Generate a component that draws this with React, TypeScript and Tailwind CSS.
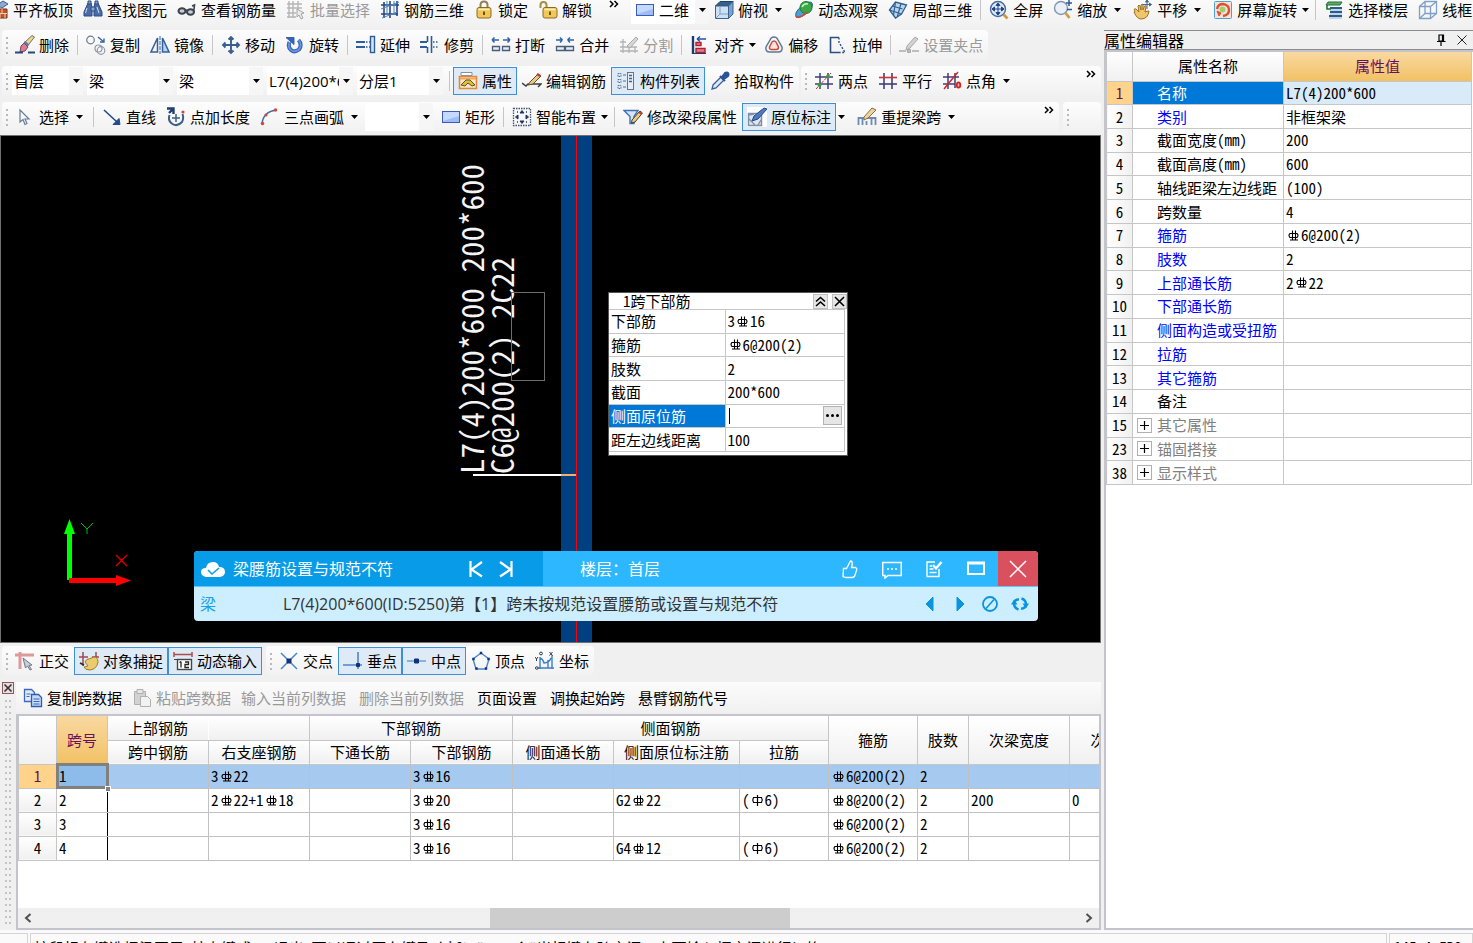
import React from "react";

type Kids = { children?: React.ReactNode };

const icons: Record<string, React.ReactNode> = {
  flush: (
    <>
      <path d="M8 5 14 1l5 3-6 4z" fill="#8ea9cf" stroke="#3c5f96" />
      <path d="M9 9h9v9H9z" fill="#c0562a" stroke="#7b2f12" />
      <path d="M9 13.5h9M13 9v4.500M11 13.500V18M16 13.500V18" stroke="#f3d3b4" />
    </>
  ),
  binoculars: (
    <>
      <path d="M5 3h3l1 4v9H1v-4zM12 3h3l4 9v4h-8V7z" fill="#4a6da8" stroke="#2b4a82" />
      <path d="M8 7h4v4H8zM5 1h3v3H5zM12 1h3v3h-3z" fill="#88a5d2" stroke="#2b4a82" />
      <path d="M4 8l-1.500 5M14 7l2 6" stroke="#cfdcf2" />
    </>
  ),
  glasses: (
    <>
      <ellipse cx="5" cy="11" rx="3.500" ry="2.800" fill="#c9ced6" stroke="#3d434c" strokeWidth="2" />
      <ellipse cx="13.500" cy="12" rx="3.500" ry="2.800" fill="#c9ced6" stroke="#3d434c" strokeWidth="2" />
      <path d="M8 10.500q1.200-1 2.400 0M16.700 11.500 17.500 5l-2.500 1" stroke="#3d434c" strokeWidth="1.600" />
    </>
  ),
  batch: (
    <>
      <path d="M3 1v17M7 1v17M12 1v10M1 4h15M1 8h15M1 13h9M1 17h9" stroke="#b5b5b5" strokeWidth="1.400" />
      <path d="m11 9 7 4-3 1 2 4-2 1-2-4-2 2z" fill="#ececec" stroke="#a5a5a5" />
    </>
  ),
  grid3d: (
    <>
      <path d="M1 5h18M1 14h17M4 2v16M10 1v17M17 1v15" stroke="#28467c" strokeWidth="1.600" />
      <path d="M1 9 19 2M2 18l15-6M7 1v14M14 1v14" stroke="#4f86c6" />
    </>
  ),
  lock: (
    <>
      <path d="M6.500 8V5q0-3.500 3.500-3.500T13.500 5v3" stroke="#8d8256" strokeWidth="2" />
      <rect x="3" y="7.500" width="14" height="10.500" rx="2" fill="#f1c75a" stroke="#8d6b1e" />
      <path d="M4.500 9.500h11" stroke="#fff0bc" strokeWidth="1.500" />
      <path d="M10 11.500v3.500" stroke="#6c5214" strokeWidth="2" />
    </>
  ),
  unlock: (
    <>
      <path d="M2.500 8V5Q2.500 2 5.500 2T8.500 5v3" stroke="#a98f43" strokeWidth="2" />
      <rect x="5" y="7.500" width="14" height="10.500" rx="2" fill="#f1c75a" stroke="#8d6b1e" />
      <path d="M6.500 9.500h11" stroke="#fff0bc" strokeWidth="1.500" />
      <path d="M12 11.500v3.500" stroke="#6c5214" strokeWidth="2" />
    </>
  ),
  rect: (
    <>
      <rect x="1.500" y="4.500" width="17" height="11" fill="#9dbcf8" stroke="#3a5cb8" />
      <path d="M2 5h16v4L2 14z" fill="#c5d8fd" stroke="none" />
    </>
  ),
  cube: (
    <>
      <path d="M1.500 6 6 1.500h13L14.500 6z" fill="#35618f" stroke="#1f4269" />
      <path d="M1.500 6h13v12.500h-13z" fill="#cde1f3" stroke="#3a648f" />
      <path d="M14.500 6 19 1.500V14l-4.500 4.500z" fill="#7ba3cb" stroke="#3a648f" />
      <path d="M1.500 18.500 6 14h8M6 14V7" stroke="#7d9fc0" />
    </>
  ),
  orbit: (
    <>
      <path d="M2 17Q0 12 8 6T18 3q2 4-5 10T2 17z" fill="#4e9fd3" stroke="#25618f" />
      <circle cx="12" cy="7.500" r="6" fill="#39a845" stroke="#1f7a30" />
      <path d="M8 7q2-4 6-3" stroke="#c7f0bf" strokeWidth="1.600" />
      <path d="M2 17q5 1 11-5" stroke="#d8482f" strokeWidth="1.600" />
    </>
  ),
  local3d: (
    <>
      <path d="m1.500 10 6-8 11 3-5 9-6 4z" fill="#b8d4ee" stroke="#2f608f" strokeWidth="1.300" />
      <path d="m4.500 6 10 3M7.500 2l-2 13M13 3.500 9.500 16M1.500 10l12 4" stroke="#2f608f" strokeWidth="1.200" />
    </>
  ),
  full: (
    <>
      <circle cx="9" cy="9" r="7.500" fill="#dce8f8" stroke="#4a6a9a" strokeWidth="1.400" />
      <path d="M9 3.500v11M3.500 9h11M9 3 7 5.500h4zM9 15l-2-2.500h4zM3 9l2.500-2v4zM15 9l-2.500-2v4z" fill="#1f4684" stroke="#1f4684" />
      <path d="m14.500 14.500 4 4" stroke="#c99b40" strokeWidth="2.600" />
    </>
  ),
  zoom: (
    <>
      <circle cx="8" cy="8" r="6.500" fill="#e9f0fa" stroke="#8295b0" strokeWidth="1.400" />
      <path d="m12.500 13 4 5" stroke="#d29c3c" strokeWidth="2.800" />
      <path d="M13 3h6M16 0v6M14 9.500h5" stroke="#2d5795" strokeWidth="1.500" />
    </>
  ),
  pan: (
    <>
      <path d="M2 12q-2-4 1-3l3 3-1-6q1-2 2 0l1 4V5q1.500-2 2 0v5l1.500-4q2-1 1.500 1l-1 5q2-1 4-1-1 8-8 8-4 0-7-7z" fill="#f0c56b" stroke="#9b7123" />
      <path d="M14 0v9M9.500 4.500h9M14 0l-1.500 2h3zM18.500 4.500l-2-1.500v3z" fill="#4a6690" stroke="#4a6690" />
    </>
  ),
  screenRotate: (
    <>
      <rect x="1.500" y="1.500" width="17" height="17" rx="1" fill="#f3e2e0" stroke="#4ea3cc" />
      <path d="M4 9q1-5 6-5 6 1 6 6 0 5-6 6" stroke="#e0512b" strokeWidth="2.400" />
      <path d="m4 11 4 2-2 3z" fill="#e0512b" stroke="#e0512b" />
      <circle cx="9.500" cy="9.500" r="3" fill="#9bd06a" stroke="none" />
    </>
  ),
  floors: (
    <>
      <path d="M4 2 2 5h14l2-3z" fill="#58b05c" stroke="#23703a" />
      <path d="M6 8h12M6 12h12M5 16h13" stroke="#2b5c8c" strokeWidth="2" />
      <path d="M6 10h12M6 14h12M5 18h13" stroke="#8db6dc" />
      <path d="M3 5v4h4" stroke="#23703a" strokeWidth="1.600" />
    </>
  ),
  wire: (
    <>
      <path d="M1.500 6.500h11v12h-11zM7 1.500h11.500v12H7zM1.500 6.500 7 1.500M12.500 6.500l6-5M12.500 18.500l6-5M1.500 18.500l5.500-5" stroke="#7f9fc4" strokeWidth="1.300" />
    </>
  ),
  erase: (
    <>
      <path d="m9 8 8-7.500 2.500 1.500-7 9z" fill="#f3d77a" stroke="#6b6f86" />
      <path d="m6 11 3-3 4 4-3 4-5 1z" fill="#d87d94" stroke="#7d3f58" />
      <path d="m9.500 6.500 4 4" stroke="#5b79b6" strokeWidth="2.400" />
      <path d="M0 17.500h8M13 17.500h7" stroke="#27497e" strokeWidth="2" />
    </>
  ),
  copy: (
    <>
      <circle cx="4.500" cy="5" r="3.800" stroke="#6f7b8c" strokeWidth="1.200" />
      <circle cx="12.500" cy="13.500" r="3.500" stroke="#8e98a6" strokeWidth="1.200" />
      <circle cx="15" cy="15.500" r="3.800" stroke="#8e98a6" strokeWidth="1.200" />
      <path d="m12 2 6 5M18 3.500V7h-4" stroke="#3a64a6" strokeWidth="1.400" />
    </>
  ),
  mirror: (
    <>
      <path d="M7.500 3v14H1z" stroke="#33619f" strokeWidth="1.500" />
      <path d="M12.500 3v14H19z" fill="#b9d3ef" stroke="#33619f" strokeWidth="1.500" />
      <path d="M10 1v18" stroke="#33619f" strokeDasharray="4 1" />
    </>
  ),
  move: <path d="M10 2v16M2 10h16M7.500 4.500 10 2l2.500 2.500M7.500 15.500 10 18l2.500-2.500M4.500 7.500 2 10l2.500 2.500M15.500 7.500 18 10l-2.500 2.500" stroke="#3b5f8f" strokeWidth="1.900" />,
  rotate: (
    <>
      <path d="M4.500 7Q2.500 12 6 15t8-.500q3.500-5-.500-9.500" stroke="#3762b5" strokeWidth="4" />
      <path d="M4.500 7Q2.500 12 6 15t8-.500q3.500-5-.500-9.500" stroke="#6e97e2" strokeWidth="1.600" />
      <path d="M1 2.500h8v7z" fill="#3762b5" stroke="#3762b5" />
    </>
  ),
  extend: (
    <>
      <path d="M0 7h9M0 12h9" stroke="#2d5c99" strokeWidth="1.800" />
      <path d="M10 7h4M10 12h4" stroke="#2d5c99" strokeWidth="1.500" strokeDasharray="1.500 1.500" />
      <rect x="14.500" y="1.500" width="4" height="16" fill="#d5e5f7" stroke="#2d5c99" strokeWidth="1.400" />
    </>
  ),
  trim: (
    <>
      <path d="M0 7h7M0 12h7" stroke="#2d5c99" strokeWidth="1.800" />
      <path d="M13 7h6M13 12h6" stroke="#2d5c99" strokeWidth="1.500" strokeDasharray="1.500 1.500" />
      <path d="M7.500 18V12M7.500 7V1M11.500 1v17" stroke="#2d5c99" strokeWidth="1.600" />
    </>
  ),
  breakIcon: (
    <>
      <path d="M1 5h7M1 5l2.500-2.500M1 5l2.500 2.500M19 5h-7M19 5l-2.500-2.500M19 5l-2.500 2.500" stroke="#2f62ad" strokeWidth="1.500" />
      <path d="M1.500 11.500h7v4h-7zM11.500 11.500h7v4h-7z" fill="#e4edf7" stroke="#4a5d78" strokeWidth="1.300" />
    </>
  ),
  merge: (
    <>
      <path d="M1 5h6M7.500 5 5 2.500M7.500 5 5 7.500M19 5h-6M12.500 5 15 2.500M12.500 5 15 7.500" stroke="#2f62ad" strokeWidth="1.500" />
      <path d="M1.500 11.500h8v4h-8zM10.500 11.500h8v4h-8z" fill="#e4edf7" stroke="#4a5d78" strokeWidth="1.300" />
    </>
  ),
  split: (
    <>
      <path d="M1 7h6M1 16h18M4 4v14M10 12v6M16 12v6M1 12h17" stroke="#b3b3b3" strokeWidth="1.300" />
      <path d="m8 11 9-9 2 2-8 9z" fill="#d7d7d7" stroke="#a8a8a8" />
    </>
  ),
  align: (
    <>
      <path d="M3 1v18" stroke="#1d3a73" strokeWidth="2.400" />
      <path d="M6 7.500h5v3H6zM6 13.500h9v4H6z" fill="#e87b86" stroke="#b02035" strokeWidth="1.400" />
      <path d="M7 4h9M7 4l3-2.500M7 4l3 2.500" stroke="#2450a2" strokeWidth="1.400" />
      <path d="M3 18.500h13" stroke="#1d3a73" />
    </>
  ),
  offset: (
    <>
      <path d="M10 2q3 0 4 3l4 7q1 5-4 5H6q-5 0-4-5l4-7q1-3 4-3z" stroke="#5b7896" strokeWidth="1.500" />
      <path d="M10 6q2 0 2.500 2l2 4q0 2.500-2 2.500h-5q-2.500 0-2-2.500l2-4Q8 6 10 6z" fill="#fbe0dc" stroke="#cc4a3c" strokeWidth="1.500" />
    </>
  ),
  stretch: (
    <>
      <path d="M11 2.500H2.500v15H11" stroke="#2a5082" strokeWidth="1.600" />
      <path d="M11 2.500v5l6 10h-6" stroke="#2a5082" strokeWidth="1.400" strokeDasharray="2 1.500" />
    </>
  ),
  grip: (
    <>
      <path d="m8 11 8-9 3 2-8 9-4 2z" fill="#d2d2d2" stroke="#aaa" />
      <path d="M0 16h7M13 16h7" stroke="#aaa" strokeWidth="1.400" />
      <path d="M8.500 14.500h3v3h-3z" fill="#bbb" stroke="#aaa" />
    </>
  ),
  props: (
    <>
      <path d="M3 1.500h11v3H3z" fill="#fff" stroke="#8291a6" />
      <path d="M1.500 5.500h17v12h-17z" fill="#fde6c4" stroke="#e08a3c" strokeWidth="1.600" />
      <path d="M2 7.500h16" stroke="#f0a860" strokeWidth="2" />
      <path d="m3 14 5-5 4 0 5 5-3 1-4-3-3 3z" fill="#e0bd3c" stroke="#4f5a2a" />
    </>
  ),
  editBar: (
    <>
      <path d="M0 12l4 3 2-2h13l-3 3" stroke="#3c3c3c" strokeWidth="1.500" />
      <path d="m8 11 8-8 3 2-8 8-5 1z" fill="#e8c78a" stroke="#6b4a2a" />
      <path d="m15 3 3 2" stroke="#c23a3a" strokeWidth="2.200" />
    </>
  ),
  list: (
    <>
      <path d="M2 2.500h3v3H2zM2 8.500h3v3H2zM2 14.500h3v3H2z" stroke="#506e97" strokeDasharray="1.500 .8" />
      <path d="M7 4h3M7 10h3M7 16h3" stroke="#506e97" />
      <rect x="11.500" y="1.500" width="6" height="17" fill="#e9eef6" stroke="#60758f" />
      <path d="M13 4.500h3M13 7.500h3M13 10.500h3" stroke="#3b62a6" strokeWidth="1.500" />
    </>
  ),
  picker: (
    <>
      <path d="m3 14 8-8 3 3-8 8-4 1z" fill="#dfe9f7" stroke="#3b5f98" strokeWidth="1.300" />
      <path d="m10 5 5 5M12 6l3-4q2-1 3 0t0 3l-4 3z" fill="#2c5397" stroke="#2c5397" strokeWidth="2" />
    </>
  ),
  twoPt: (
    <>
      <path d="M6 2v16M14 2v16M1 6h18M1 13h18" stroke="#403f7b" strokeWidth="1.500" />
      <path d="M2 18 17 2" stroke="#c93636" strokeDasharray="3 1" />
      <circle cx="5.500" cy="14" r="2" fill="#3e9a35" stroke="none" />
      <circle cx="14" cy="5.500" r="2" fill="#3e9a35" stroke="none" />
    </>
  ),
  parallel: (
    <>
      <path d="M6 2v16M14 2v16" stroke="#403f7b" strokeWidth="1.600" />
      <path d="M1 6.500h18" stroke="#c93636" strokeWidth="1.600" />
      <path d="M1 13h18" stroke="#403f7b" strokeWidth="1.600" />
    </>
  ),
  angle: (
    <>
      <path d="M6 2v16M13 2v15M1 6h16M1 13h12" stroke="#403f7b" strokeWidth="1.500" />
      <path d="M2 18 16 1" stroke="#d32222" strokeWidth="1.400" />
      <ellipse cx="16.500" cy="14" rx="1.800" ry="2.600" fill="#f6b0b0" stroke="#d32222" strokeWidth="1.800" />
    </>
  ),
  cursor: <path d="M5 3v12l3-2.500 2 5 2-1-2-4.500h4z" fill="#f4f7fb" stroke="#6a7d99" strokeWidth="1.200" />,
  line: (
    <>
      <path d="m2 3 13 12" stroke="#234a8c" strokeWidth="1.600" />
      <path d="M18 17.500h-7l6-6z" fill="#234a8c" stroke="#234a8c" />
    </>
  ),
  ptLength: (
    <>
      <path d="M3.500 8q-2 6 3 9t9.500-2q2-4 .500-8" stroke="#3d6085" strokeWidth="2" />
      <path d="M1 1.500h6.500V7M3 6l4-4" stroke="#1f3f6f" strokeWidth="2.400" />
      <path d="M10 7v8M6 11h8" stroke="#3d6085" strokeWidth="1.500" />
      <circle cx="17" cy="5" r="1.600" fill="#d04b3c" stroke="none" />
    </>
  ),
  arc: (
    <>
      <path d="M2 17Q3 5 16 3" stroke="#3c6eb0" strokeWidth="1.500" />
      <circle cx="2.500" cy="16.500" r="1.800" fill="#d04b3c" stroke="none" />
      <circle cx="6" cy="8" r="1.600" fill="#d04b3c" stroke="none" />
      <circle cx="15.500" cy="3" r="1.800" fill="#d04b3c" stroke="none" />
    </>
  ),
  smart: (
    <>
      <rect x="1.500" y="1.500" width="17" height="17" stroke="#41536e" strokeDasharray="1.500 1" strokeWidth="1.300" />
      <path d="m10 3.500 2 2.500H8zM10 16.500 8 14h4zM3.500 10 6 8v4zM16.500 10 14 12V8z" fill="#22375c" stroke="#22375c" />
      <path d="M5 5h1M14 5h1M5 15h1M14 15h1" stroke="#22375c" strokeWidth="1.600" />
    </>
  ),
  modify: (
    <>
      <path d="M1 3.500h14l-4 6v7H7v-7z" fill="#d5e5f7" stroke="#3d73b5" strokeWidth="1.400" />
      <path d="m9 13 8-9 2.500 2-7.500 9-3.500 1z" fill="#f0d080" stroke="#4a3a2a" />
      <path d="m16 5 2.500 2" stroke="#c23a3a" strokeWidth="2" />
    </>
  ),
  annotate: (
    <>
      <rect x="0" y="0" width="20" height="20" fill="#fff" stroke="none" />
      <path d="M1.500 6.500h13v12h-13z" fill="#dfe6f0" stroke="#7f8fa8" strokeWidth="1.500" />
      <path d="M2 12l6 6M2 8l5-1M11 18l3-5" stroke="#7f8fa8" strokeWidth="1.400" />
      <path d="m5 14 2-5 10-8 3 1-9 10z" fill="#4c7bc0" stroke="#234a85" />
    </>
  ),
  reSpan: (
    <>
      <path d="M1.500 18v-7h4v7M5.500 11h9v7M9.500 18v-4M14.500 11h4v7" stroke="#6d8bb0" strokeWidth="1.800" />
      <path d="m7 10 8-9 4 2-8 8-4 2z" fill="#ecd6a0" stroke="#8a6b40" />
    </>
  ),
  ortho: (
    <>
      <path d="M0 4h19M5 1v17" stroke="#dc9a9c" strokeWidth="3" />
      <path d="m8 7 9 7-3 .5 2.500 4-1.500.5-2.500-4-2 2z" fill="#c8ccd4" stroke="#70798a" />
    </>
  ),
  snap: (
    <>
      <path d="M4 1v14M0 6h9M17 1v6M13 6h7" stroke="#a04a50" strokeWidth="1.500" />
      <path d="M6 11q2-4 4-3l5-2q4 0 4 5-1 7-8 8-5 0-6-3l4-1z" fill="#eacb6e" stroke="#a17c2c" />
      <path d="m1 12 4 2" stroke="#2c2c2c" strokeWidth="1.600" />
    </>
  ),
  dyn: (
    <>
      <path d="M1 1v5M19 1v5M1 3.500h18" stroke="#b14a50" strokeWidth="1.500" />
      <rect x="4.500" y="8.500" width="14" height="10" fill="#fff" stroke="#444" strokeWidth="1.400" />
      <path d="M8 10.500v6M6.500 11.500 8 10.500M12 11h3.500v2.500H12V16.500h4" stroke="#222" strokeWidth="1.300" />
      <path d="M1 8.500h3" stroke="#444" />
    </>
  ),
  cross: (
    <>
      <path d="m2 2 16 16M18 2 2 18" stroke="#4a86cc" strokeWidth="1.500" />
      <path d="M8 8h4v4H8z" fill="#12307c" stroke="#12307c" />
    </>
  ),
  perp: (
    <>
      <path d="M0 14h19M15 1v17" stroke="#4a86cc" strokeWidth="1.600" />
      <path d="M13.500 12.500h3v3h-3z" fill="#12307c" stroke="#12307c" />
    </>
  ),
  mid: (
    <>
      <path d="M0 10h19" stroke="#6c9ed8" strokeWidth="1.500" />
      <path d="M7.500 8h4v4h-4z" fill="#12307c" stroke="#12307c" />
    </>
  ),
  vertex: (
    <>
      <path d="m10 2 8 6-3 10H5L2 8z" stroke="#4a86cc" strokeWidth="1.400" />
      <path d="M9.500 1.500h1v1h-1zM17 7.500h1v1h-1zM2 7.500h1v1H2zM5 17h1v1H5zM14.500 17h1v1h-1z" stroke="#12307c" strokeWidth="1.400" />
    </>
  ),
  coord: (
    <>
      <path d="M5 6v12M3 17h16M5 7q3 1 4 5 5 0 7-5M13 9v8M17 4v14" stroke="#3a7fc8" strokeWidth="1.400" />
      <circle cx="6" cy="2.500" r="1.400" stroke="#2b3850" />
      <path d="m14.500 1 3 3.500M17.500 1l-3 3.500M0 6l1.500 2L3 6M1.500 8v2" stroke="#2b3850" />
      <circle cx="1.800" cy="17" r="1.300" stroke="#2b3850" />
    </>
  ),
  docs: (
    <>
      <path d="M1.500 1.500h7l3 3v9h-10z" fill="#dfeafb" stroke="#3d69b8" strokeWidth="1.300" />
      <path d="M8.500 6.500h7l3 3v9h-10z" fill="#c6dafa" stroke="#2f5cb0" strokeWidth="1.300" />
      <path d="M10.500 11h6M10.500 13.500h6M10.500 16h6M3.500 6h4M3.500 8.500h3" stroke="#3d69b8" />
    </>
  ),
  paste: (
    <>
      <path d="M2.500 3.500h11v13h-11z" fill="#d2d2d2" stroke="#b0b0b0" />
      <path d="M5 1.500h6v4H5z" fill="#e6e6e6" stroke="#b0b0b0" />
      <path d="M8.500 8.500h7l3 3v7h-10z" fill="#f2f2f2" stroke="#b0b0b0" />
    </>
  ),
};

const Icon = ({ name }: { name: string }) => (
  <svg viewBox="0 0 20 20" fill="none" aria-hidden="true" className="h-5 w-5 shrink-0">
    {icons[name]}
  </svg>
);

const Tri = () => (
  <svg viewBox="0 0 7 4" aria-hidden="true" className="h-1 w-[7px] shrink-0 fill-black">
    <path d="M0 0h7L3.500 4z" />
  </svg>
);

type ToolProps = {
  icon?: string;
  label: string;
  on?: boolean;
  off?: boolean;
  arrow?: "split" | "menu";
};

const Tool = ({ icon, label, on, off, arrow }: ToolProps) => (
  <>
    <button
      type="button"
      disabled={off}
      aria-pressed={on}
      className={`flex h-7 shrink-0 items-center gap-1 border px-1 whitespace-nowrap ${
        on ? "border-[#3b8fdd] bg-[#deebf6]" : "border-transparent"
      } ${off ? "text-[#9a9a9a]" : "text-black"}`}
    >
      {icon && <Icon name={icon} />}
      {label}
    </button>
    {arrow && (
      <button
        type="button"
        aria-label={`${label}选项`}
        className={`flex h-7 shrink-0 items-center ${arrow === "split" ? "w-4 pl-0.5" : "w-[10px]"}`}
      >
        <Tri />
      </button>
    )}
  </>
);

const Sep = () => (
  <span className="flex h-5 w-[7px] shrink-0 justify-center">
    <span className="w-px bg-[#c6c6c6]" />
  </span>
);

const Handle = () => (
  <span className="flex w-2 shrink-0 flex-col items-center gap-[3px] pl-0.5">
    {[0, 1, 2, 3].map((i) => (
      <span key={i} className="h-0.5 w-0.5 bg-[#b9b9b9]" />
    ))}
  </span>
);

const Bar = ({ children, grow }: Kids & { grow?: boolean }) => (
  <div
    className={`flex h-[30px] min-w-0 items-center rounded-sm bg-gradient-to-b from-[#fdfdfd] to-[#f1f1f1] ${
      grow ? "flex-1" : ""
    }`}
  >
    {children}
  </div>
);

const Combo = ({ label, value, width, icon }: { label: string; value: string; width: string; icon?: string }) => (
  <div className={`flex h-7 shrink-0 items-center bg-white ${width}`}>
    {icon && (
      <span className="px-1">
        <Icon name={icon} />
      </span>
    )}
    <select aria-label={label} className="h-7 min-w-0 flex-1 appearance-none overflow-hidden bg-white text-black data-[pad=true]:pl-0.5" data-pad={!icon}>
      <option>{value}</option>
    </select>
    <span className="flex h-7 w-[14px] shrink-0 items-center justify-center bg-[#f6f6f6]">
      <Tri />
    </span>
  </div>
);

const More = () => (
  <button type="button" aria-label="更多" className="flex h-4 w-5 shrink-0 items-start justify-center">
    <svg viewBox="0 0 10 8" fill="none" stroke="#000" strokeWidth="1.500" className="h-2 w-[10px]">
      <path d="m1 1 3 3-3 3M5.500 1l3 3-3 3" />
    </svg>
  </button>
);

/* Bar-grade marks: # is ribbed steel, ~ is plain round steel. */
const Mark = ({ plain }: { plain?: boolean }) => (
  <svg viewBox="0 0 15 15" fill="none" stroke="currentColor" className="h-[15px] w-[15px] shrink-0" aria-hidden="true">
    {plain ? (
      <path d="M3.500 4.500h8q1.500 2.500 0 5h-8q-1.500-2.500 0-5zM7.500 2v11" strokeWidth="1.200" />
    ) : (
      <path d="M4 5.500h7q2 2 0 4H4q-2-2 0-4zM6.500 2.500v10M9.500 2.500v10M4 12h8" strokeWidth="1.100" />
    )}
  </svg>
);

const Value = ({ text }: { text: string }) => (
  <span className="flex items-center whitespace-pre">
    {text.split(/([#~])/).map((part, i) =>
      part === "#" ? <Mark key={i} /> : part === "~" ? <Mark key={i} plain /> : <span key={i}>{part}</span>
    )}
  </span>
);

const monoText = "font-['Noto_Sans_Mono_CJK_SC','Noto_Sans_CJK_SC',monospace]";

const props: [number, string, string, string][] = [
  [1, "名称", "L7(4)200*600", "sel"],
  [2, "类别", "非框架梁", "blue"],
  [3, "截面宽度(mm)", "200", ""],
  [4, "截面高度(mm)", "600", ""],
  [5, "轴线距梁左边线距", "(100)", ""],
  [6, "跨数量", "4", ""],
  [7, "箍筋", "#6@200(2)", "blue"],
  [8, "肢数", "2", "blue"],
  [9, "上部通长筋", "2#22", "blue"],
  [10, "下部通长筋", "", "blue"],
  [11, "侧面构造或受扭筋", "", "blue"],
  [12, "拉筋", "", "blue"],
  [13, "其它箍筋", "", "blue"],
  [14, "备注", "", ""],
  [15, "其它属性", "", "group"],
  [23, "锚固搭接", "", "group"],
  [38, "显示样式", "", "group"],
];

const nameColor: Record<string, string> = {
  sel: "bg-[#0078d7] text-white",
  blue: "text-[#0000ff]",
  group: "text-[#808080]",
  "": "text-black",
};

const PropertyPanel = () => (
  <aside className={`flex w-[369px] shrink-0 flex-col border-b-2 border-[#c4c4cc] text-[15px] leading-5 ${monoText}`}>
    <div className="flex h-5 items-center border-t border-b border-[#8c8c8c] bg-[#f0f0f0]">
      <h2 className="flex-1 text-[16px]">属性编辑器</h2>
      <button type="button" aria-label="固定" className="mr-2 flex h-4 w-4 items-center justify-center">
        <svg viewBox="0 0 10 12" fill="none" stroke="#000" className="h-3 w-[10px]">
          <path d="M3 1h4.500v6H3zM1 7.500h8.500M5 7.500V12M6.500 1v6" strokeWidth="1.200" />
        </svg>
      </button>
      <button type="button" aria-label="关闭属性编辑器" className="flex h-4 w-4 items-center">
        <svg viewBox="0 0 10 10" stroke="#222" className="h-[10px] w-[10px]">
          <path d="m.5.5 9 9M9.500.500l-9 9" />
        </svg>
      </button>
    </div>
    <div className="min-h-0 flex-1 border-t-2 border-l-2 border-[#c4c4cc] bg-white">
      <table className="h-[433px] w-[366px] table-fixed border-collapse">
        <colgroup>
          <col className="w-[26px]" />
          <col className="w-[151px]" />
          <col />
        </colgroup>
        <thead>
          <tr className="h-[29px] bg-gradient-to-b from-white to-[#f0f0f0]">
            <th className="border border-t-0 border-[#c6c6c6] p-0" />
            <th className="border border-t-0 border-[#c6c6c6] p-0 font-normal">属性名称</th>
            <th className="border border-t-0 border-[#c6c6c6] bg-gradient-to-b from-[#f9d8a0] to-[#f1c163] p-0 font-normal text-[#6a0f5c]">
              属性值
            </th>
          </tr>
        </thead>
        <tbody>
          {props.map(([n, name, value, kind]) => (
            <tr key={n}>
              <th
                scope="row"
                className={`border border-[#c6c6c6] p-0 font-normal ${
                  kind === "sel" ? "bg-[#ffd48a] text-[#6a0f5c]" : "bg-gradient-to-r from-white to-[#f0f0f0]"
                }`}
              >
                {n}
              </th>
              <td className={`border border-[#c6c6c6] p-0 ${nameColor[kind]}`}>
                <span className="flex items-center whitespace-nowrap">
                  <span className="flex w-6 shrink-0 items-center pl-1">
                    {kind === "group" && (
                      <button
                        type="button"
                        aria-label={`展开${name}`}
                        className="flex h-[15px] w-[15px] items-center justify-center border border-[#b0b0b0] bg-white text-black"
                      >
                        <svg viewBox="0 0 9 9" stroke="#000" className="h-[9px] w-[9px]">
                          <path d="M4.500 0v9M0 4.500h9" strokeWidth="1.200" />
                        </svg>
                      </button>
                    )}
                  </span>
                  {name}
                </span>
              </td>
              <td className={`border border-[#c6c6c6] p-0 pl-0.5 ${kind === "sel" ? "bg-[#d9eaf9]" : "bg-white"}`}>
                <Value text={value} />
              </td>
            </tr>
          ))}
        </tbody>
      </table>
    </div>
  </aside>
);

const Drawing = () => (
  <svg className="absolute inset-0 h-full w-full" aria-label="梁平面图">
    <rect x="560" y="0" width="31" height="100%" fill="#004080" />
    <rect x="575" y="0" width="1" height="100%" fill="#ff0000" shapeRendering="crispEdges" />
    <rect x="472" y="338" width="103" height="2" fill="#ffffff" />
    <rect x="560" y="338" width="15" height="2" fill="#f0b070" />
    <g className={monoText} fontSize="31" fill="#f4f4f4">
      <text transform="translate(483 338) rotate(-90)" xmlSpace="preserve">L7(4)200*600 200*600</text>
      <text transform="translate(513 338) rotate(-90)" xmlSpace="preserve">C6@200(2) 2C22</text>
    </g>
    <rect x="510.500" y="156.500" width="33" height="88" fill="none" stroke="#6e6e6e" />
    <path d="M66 444V398h-3l5.500-15 5.500 15h-3v46z" fill="#00ff00" />
    <path d="M68 442h47v-3l15 5.500-15 5.500v-3H68z" fill="#ff0000" />
    <path d="m80 387 6 6 6-6M86 393v5" fill="none" stroke="#00c000" />
    <path d="m115 419 11 11M126 419l-11 11" fill="none" stroke="#e00000" strokeWidth="1.300" />
  </svg>
);

const spanRows: [string, string][] = [
  ["下部筋", "3#16"],
  ["箍筋", "#6@200(2)"],
  ["肢数", "2"],
  ["截面", "200*600"],
  ["侧面原位筋", ""],
  ["距左边线距离", "100"],
];

const SpanDialog = () => (
  <section className={`absolute top-[156px] left-[607px] w-[240px] border border-[#555] bg-white pb-[3px] text-[15px] leading-5 ${monoText}`}>
    <div className="flex h-4 items-center">
      <h3 className="flex-1 pl-[14px]">1跨下部筋</h3>
      <button type="button" aria-label="收起" className="mr-1 flex h-[15px] w-[15px] items-center justify-center border border-[#c0c0c0] bg-[#e6e6e6]">
        <svg viewBox="0 0 11 11" fill="none" stroke="#000" strokeWidth="1.600" className="h-[11px] w-[11px]">
          <path d="M1 5.500 5.500 1.500 10 5.500M1 10l4.500-4L10 10" />
        </svg>
      </button>
      <button type="button" aria-label="关闭" className="flex h-[15px] w-[15px] items-center justify-center border border-[#c0c0c0] bg-[#e6e6e6]">
        <svg viewBox="0 0 11 11" fill="none" stroke="#000" strokeWidth="1.600" className="h-[11px] w-[11px]">
          <path d="m1 1 9 9M10 1l-9 9" />
        </svg>
      </button>
    </div>
    <table className="h-[143px] w-[236px] table-fixed border-collapse border-t border-[#777]">
      <colgroup>
        <col className="w-[116px]" />
        <col />
      </colgroup>
      <tbody>
        {spanRows.map(([name, value]) => (
          <tr key={name}>
            <th
              scope="row"
              className={`border border-l-0 border-[#c6c6c6] p-0 pl-0.5 text-left font-normal whitespace-nowrap ${
                value === "" ? "bg-[#0078d7] text-white" : ""
              }`}
            >
              {name}
            </th>
            <td className="border border-[#c6c6c6] p-0 pl-0.5">
              {value === "" ? (
                <span className="flex items-center pl-px">
                  <input aria-label={name} className="h-4 min-w-0 flex-1 border-l border-black outline-none" />
                  <button type="button" aria-label="更多选项" className="mr-0.5 flex h-[19px] w-[19px] items-center justify-center gap-0.5 border border-[#b4b4b4] bg-[#e6e6e6]">
                    {[0, 1, 2].map((i) => (
                      <span key={i} className="h-[3px] w-[3px] rounded-full bg-black" />
                    ))}
                  </button>
                </span>
              ) : (
                <Value text={value} />
              )}
            </td>
          </tr>
        ))}
      </tbody>
    </table>
  </section>
);

const NoticeButton = ({ label, children }: Kids & { label: string }) => (
  <button type="button" aria-label={label} className="flex h-5 w-5 items-center justify-center">
    <svg viewBox="0 0 20 20" fill="none" stroke="currentColor" className="h-5 w-5">
      {children}
    </svg>
  </button>
);

const Notice = () => (
  <section className="absolute top-[415px] left-[193px] w-[844px] overflow-hidden rounded-sm bg-[#cceeff] text-[16px] leading-6">
    <div className="flex h-[35px] items-stretch text-white">
      <div className="flex w-[349px] items-center bg-[#079be8] pl-1.5">
        <svg viewBox="0 0 26 18" className="h-[18px] w-[26px]" fill="#fff">
          <path d="M6 17q-5-1-5-5 0-4 5-4 1-6 7-6 5 0 6 5 6 0 6 5 0 4-5 5z" />
          <path d="m8 10 4 4 7-6" fill="none" stroke="#079be8" strokeWidth="1.500" />
        </svg>
        <h3 className="flex-1 pl-[7px]">梁腰筋设置与规范不符</h3>
        <div className="flex gap-[10px] pr-[27px]">
          <NoticeButton label="上一条">
            <path d="M4.500 2v16M16 3 5.500 10.500 16 17.500" strokeWidth="2.200" />
          </NoticeButton>
          <NoticeButton label="下一条">
            <path d="M15.500 2v16M4 3l10.500 7.500L4 17.500" strokeWidth="2.200" />
          </NoticeButton>
        </div>
      </div>
      <div className="flex flex-1 items-center bg-[#2db7ff] pl-[37px]">
        <p className="flex-1">楼层：首层</p>
        <div className="flex gap-[22px] pr-3">
          <NoticeButton label="赞同">
            <path d="M3.500 9.500h3l4-7.500q3 0 1 6.500h4q2 1 1 3l-2 6q-1 1-3 1H6l-3-1z" strokeWidth="1.300" />
          </NoticeButton>
          <NoticeButton label="评论">
            <path d="M.700 3.500h18.600v13H6l-3 2.500v-2.500H.700zM5 10h2M9 10h2M13 10h2" strokeWidth="1.500" />
          </NoticeButton>
          <NoticeButton label="记录">
            <path d="M11 3H3v14.500h12V10M5.500 7H8M5.500 10h4M5.500 13.500h7" strokeWidth="1.400" />
            <path d="m9 6 3 3.500L17.500 3" strokeWidth="2.400" />
          </NoticeButton>
          <NoticeButton label="最大化">
            <path d="M2 4h16v11H2z" strokeWidth="2" />
            <path d="M1 4h18" strokeWidth="3" />
          </NoticeButton>
        </div>
      </div>
      <button type="button" aria-label="关闭提示" className="flex w-10 items-center justify-center bg-[#d9515f]">
        <svg viewBox="0 0 18 18" stroke="#fff" strokeWidth="1.500" className="h-[18px] w-[18px]">
          <path d="m1 1 16 16M17 1 1 17" />
        </svg>
      </button>
    </div>
    <div className="flex h-[35px] items-center border-t border-[#5cc8ff] pr-2">
      <a href="#beam" className="w-[89px] pl-[6px] text-[#1a9fe8]">
        梁
      </a>
      <p className="flex-1 whitespace-nowrap text-[#333]">L7(4)200*600(ID:5250)第【1】跨未按规范设置腰筋或设置与规范不符</p>
      <div className="flex gap-[10px] text-[#0a94e0]">
        <NoticeButton label="上一处">
          <path d="M13 3v14l-7-7z" fill="currentColor" />
        </NoticeButton>
        <NoticeButton label="下一处">
          <path d="M7 3v14l7-7z" fill="currentColor" />
        </NoticeButton>
        <NoticeButton label="忽略">
          <circle cx="10" cy="10" r="7" strokeWidth="1.800" />
          <path d="m6 14.500 8-9" strokeWidth="1.600" />
        </NoticeButton>
        <NoticeButton label="刷新">
          <path d="M8.500 15.500Q4 14 4 9.500 5 5 9 5.500M11.500 4.500q4.500 1.500 4.500 6-1 4.500-5 4" strokeWidth="2.400" />
          <path d="m1 10.500 6.500 0-3.500-5zM19 9.500h-6.500l3.500 5z" fill="currentColor" stroke="none" />
        </NoticeButton>
      </div>
    </div>
  </section>
);

const gridRows: string[][] = [
  ["1", "", "3#22", "", "3#16", "", "", "", "#6@200(2)", "2", "", ""],
  ["2", "", "2#22+1#18", "", "3#20", "", "G2#22", "(~6)", "#8@200(2)", "2", "200", "0"],
  ["3", "", "", "", "3#16", "", "", "", "#6@200(2)", "2", "", ""],
  ["4", "", "", "", "3#16", "", "G4#12", "(~6)", "#6@200(2)", "2", "", ""],
];

const headCell = "border border-t-0 border-[#c6c6c6] bg-gradient-to-b from-white to-[#f0f0f0] p-0 font-normal whitespace-nowrap overflow-hidden";

const SpanGrid = () => (
  <div className={`flex h-[216px] flex-col border-2 border-[#c4c4cc] bg-white text-[15px] leading-5 ${monoText}`}>
    <div className="min-h-0 flex-1 overflow-hidden">
      <table className="w-[1153px] table-fixed border-collapse">
        <colgroup>
          <col className="w-[38px]" />
          <col className="w-[51px]" />
          <col className="w-[101px]" />
          <col className="w-[101px]" />
          <col className="w-[101px]" />
          <col className="w-[102px]" />
          <col className="w-[101px]" />
          <col className="w-[126px]" />
          <col className="w-[89px]" />
          <col className="w-[89px]" />
          <col className="w-[51px]" />
          <col className="w-[101px]" />
          <col className="w-[102px]" />
        </colgroup>
        <thead>
          <tr className="h-6">
            <th rowSpan={2} className={headCell} />
            <th rowSpan={2} className="border border-t-0 border-[#c6c6c6] bg-gradient-to-b from-[#f9d8a0] to-[#f1c163] p-0 font-normal text-[#6a0f5c]">
              跨号
            </th>
            <th className={`${headCell} border-r-transparent`}>上部钢筋</th>
            <th className={`${headCell} border-l-0`} />
            <th colSpan={2} className={headCell}>下部钢筋</th>
            <th colSpan={3} className={headCell}>侧面钢筋</th>
            <th rowSpan={2} className={headCell}>箍筋</th>
            <th rowSpan={2} className={headCell}>肢数</th>
            <th rowSpan={2} className={headCell}>次梁宽度</th>
            <th rowSpan={2} className={headCell}>次梁加筋</th>
          </tr>
          <tr className="h-6">
            {["跨中钢筋", "右支座钢筋", "下通长筋", "下部钢筋", "侧面通长筋", "侧面原位标注筋", "拉筋"].map((h) => (
              <th key={h} className={headCell}>
                {h}
              </th>
            ))}
          </tr>
        </thead>
        <tbody>
          {gridRows.map((row, r) => (
            <tr key={r} className={`h-6 ${r === 0 ? "bg-[#a6c9ef]" : "bg-white"}`}>
              <th
                scope="row"
                className={`border border-[#c6c6c6] p-0 font-normal ${
                  r === 0 ? "bg-[#ffd48a] text-[#6a0f5c]" : "bg-gradient-to-b from-white to-[#f0f0f0]"
                }`}
              >
                {r + 1}
              </th>
              {row.map((cell, c) => (
                <td
                  key={c}
                  className={`border p-0 pl-0.5 ${
                    c === 0
                      ? r === 0
                        ? "relative border-[#808080] bg-[#8dbcea] outline-3 -outline-offset-2 outline-[#808080]"
                        : "border-[#c6c6c6] border-r-black"
                      : "border-[#c0c0c0]"
                  }`}
                >
                  <Value text={cell} />
                  {c === 0 && r === 0 && <span className="absolute -right-1 -bottom-1 h-1.5 w-1.5 border border-white bg-[#808080]" />}
                </td>
              ))}
            </tr>
          ))}
        </tbody>
      </table>
    </div>
    <div className="flex h-5 items-center bg-[#f0f0f0]">
      <button type="button" aria-label="向左滚动" className="flex w-5 justify-center">
        <svg viewBox="0 0 8 10" fill="none" stroke="#505050" strokeWidth="2" className="h-[10px] w-2">
          <path d="M6.500 1 2 5l4.500 4" />
        </svg>
      </button>
      <div className="flex h-5 flex-1">
        <div className="w-[61%]" />
        <div className="w-[300px] shrink-0 bg-[#cdcdcd]" />
        <div className="w-[39%]" />
      </div>
      <button type="button" aria-label="向右滚动" className="flex w-5 justify-center">
        <svg viewBox="0 0 8 10" fill="none" stroke="#505050" strokeWidth="2" className="h-[10px] w-2">
          <path d="M1.500 1 6 5 1.500 9" />
        </svg>
      </button>
    </div>
  </div>
);

export default function App() {
  return (
    <div className="flex h-screen flex-col overflow-hidden bg-[#f0f0f0] font-['Open_Sans','Noto_Sans_CJK_SC',sans-serif] text-[15px] leading-5 text-black">
      <header className="flex h-[30px] shrink-0 items-center overflow-hidden bg-gradient-to-b from-[#fafafa] to-[#f0f0f0] pb-[10px]">
        <div className="-ml-4 flex items-center">
          <Tool icon="flush" label="平齐板顶" />
          <Tool icon="binoculars" label="查找图元" />
          <Tool icon="glasses" label="查看钢筋量" />
          <Tool icon="batch" label="批量选择" off />
          <Tool icon="grid3d" label="钢筋三维" />
          <Tool icon="lock" label="锁定" />
          <Tool icon="unlock" label="解锁" />
          <span className="flex h-5 w-[34px] shrink-0 items-start justify-center">
            <More />
          </span>
          <Combo label="视图" value="二维" width="w-[78px]" icon="rect" />
          <Tool icon="cube" label="俯视" arrow="split" />
          <Tool icon="orbit" label="动态观察" />
          <Tool icon="local3d" label="局部三维" />
          <Sep />
          <Tool icon="full" label="全屏" />
          <Tool icon="zoom" label="缩放" arrow="split" />
          <Tool icon="pan" label="平移" arrow="split" />
          <Tool icon="screenRotate" label="屏幕旋转" arrow="menu" />
          <Sep />
          <Tool icon="floors" label="选择楼层" />
          <Tool icon="wire" label="线框" />
        </div>
      </header>

      <div className="flex min-h-0 flex-1 gap-[3px]">
        <main className="flex min-w-0 flex-1 flex-col">
          <div className="flex flex-col gap-1.5 pl-0.5">
            <div className="flex">
              <Bar>
                <Handle />
                <Tool icon="erase" label="删除" />
                <Sep />
                <Tool icon="copy" label="复制" />
                <Tool icon="mirror" label="镜像" />
                <Sep />
                <Tool icon="move" label="移动" />
                <Tool icon="rotate" label="旋转" />
                <Sep />
                <Tool icon="extend" label="延伸" />
                <Tool icon="trim" label="修剪" />
                <Sep />
                <Tool icon="breakIcon" label="打断" />
                <Tool icon="merge" label="合并" />
                <Tool icon="split" label="分割" off />
                <Sep />
                <Tool icon="align" label="对齐" arrow="menu" />
                <Tool icon="offset" label="偏移" />
                <Tool icon="stretch" label="拉伸" />
                <Sep />
                <Tool icon="grip" label="设置夹点" off />
              </Bar>
            </div>
            <div className="flex gap-0.5">
              <Bar>
                <Handle />
                <div className="flex gap-1 pr-[3px] pl-0.5">
                  <Combo label="楼层" value="首层" width="w-[71px]" />
                  <Combo label="构件类别" value="梁" width="w-[86px]" />
                  <Combo label="构件类型" value="梁" width="w-[86px]" />
                  <Combo label="构件名称" value="L7(4)200*600" width="w-[86px]" />
                  <Combo label="分层" value="分层1" width="w-[86px]" />
                </div>
                <Sep />
                <Tool icon="props" label="属性" on />
                <Tool icon="editBar" label="编辑钢筋" />
                <Tool icon="list" label="构件列表" on />
                <Tool icon="picker" label="拾取构件" />
              </Bar>
              <Bar grow>
                <Handle />
                <Tool icon="twoPt" label="两点" />
                <Tool icon="parallel" label="平行" />
                <Tool icon="angle" label="点角" arrow="split" />
                <span className="flex flex-1 justify-end self-start pt-1">
                  <More />
                </span>
              </Bar>
            </div>
            <div className="flex gap-1">
              <Bar grow>
                <Handle />
                <Tool icon="cursor" label="选择" arrow="split" />
                <Sep />
                <Tool icon="line" label="直线" />
                <Tool icon="ptLength" label="点加长度" />
                <Tool icon="arc" label="三点画弧" arrow="split" />
                <div className="pr-[3px]">
                  <Combo label="画弧方式" value="" width="w-[68px]" />
                </div>
                <Tool icon="rect" label="矩形" />
                <Sep />
                <Tool icon="smart" label="智能布置" arrow="menu" />
                <Sep />
                <Tool icon="modify" label="修改梁段属性" />
                <Tool icon="annotate" label="原位标注" on arrow="split" />
                <Tool icon="reSpan" label="重提梁跨" arrow="split" />
                <span className="flex flex-1 justify-end self-start pt-1">
                  <More />
                </span>
              </Bar>
              <div className="w-[38px] shrink-0">
                <Bar>
                  <Handle />
                </Bar>
              </div>
            </div>
          </div>

          <div className="relative mt-[3px] min-h-0 flex-1 overflow-hidden border border-[#707070] bg-black">
            <Drawing />
            <SpanDialog />
            <Notice />
          </div>

          <div className="flex items-center gap-1 pt-[3px] pb-1.5 pl-0.5">
            <Bar>
              <Handle />
              <Tool icon="ortho" label="正交" />
              <Tool icon="snap" label="对象捕捉" on />
              <Tool icon="dyn" label="动态输入" on />
            </Bar>
            <Bar>
              <Handle />
              <Tool icon="cross" label="交点" />
              <Tool icon="perp" label="垂点" on />
              <Tool icon="mid" label="中点" on />
              <Tool icon="vertex" label="顶点" />
              <Tool icon="coord" label="坐标" />
            </Bar>
          </div>

          <div className="flex">
            <div className="flex w-4 shrink-0 flex-col items-center gap-1 pb-1">
              <button type="button" aria-label="关闭跨数据" className="h-3 w-3 border border-[#8a5a5e] bg-[#e8dede]">
                <svg viewBox="0 0 10 10" stroke="#333" strokeWidth="1.600" className="h-[10px] w-[10px]">
                  <path d="m1.500 1.500 7 7M8.500 1.500l-7 7" />
                </svg>
              </button>
              <span className="min-h-0 w-2 flex-1 bg-[radial-gradient(circle,#c4c4c4_1px,transparent_1px)] bg-[length:4px_6px]" />
            </div>
            <div className="min-w-0 flex-1">
              <div className="flex h-8 items-center bg-gradient-to-b from-[#fcfcfc] to-[#f0f0f0] pl-0.5">
                <Tool icon="docs" label="复制跨数据" />
                <Tool icon="paste" label="粘贴跨数据" off />
                <div className="flex gap-[3px]">
                  <Tool label="输入当前列数据" off />
                  <Tool label="删除当前列数据" off />
                  <Tool label="页面设置" />
                  <Tool label="调换起始跨" />
                  <Tool label="悬臂钢筋代号" />
                </div>
              </div>
              <SpanGrid />
            </div>
          </div>
        </main>
        <PropertyPanel />
      </div>

      <footer className={`flex h-[13px] shrink-0 gap-0.5 overflow-hidden bg-[#fafafa] pt-[3px] text-[15px] ${monoText}`}>
        <span className="h-6 w-7 shrink-0 border-t border-r border-[#d4d4d4]" />
        <p className="h-6 min-w-0 flex-1 border border-[#d4d4d4] pt-1 pl-[3px] leading-5 whitespace-nowrap">
          按鼠标左键选择梁图元,按右键或ESC退出,可以通过回车键及shift+"←→↑"光标键在跨之间、上下输入框之间进行切换
        </p>
        <p className="h-6 w-[84px] shrink-0 border border-[#d4d4d4] pt-[3px] pl-1 leading-5">145.4 FPS</p>
      </footer>
    </div>
  );
}
